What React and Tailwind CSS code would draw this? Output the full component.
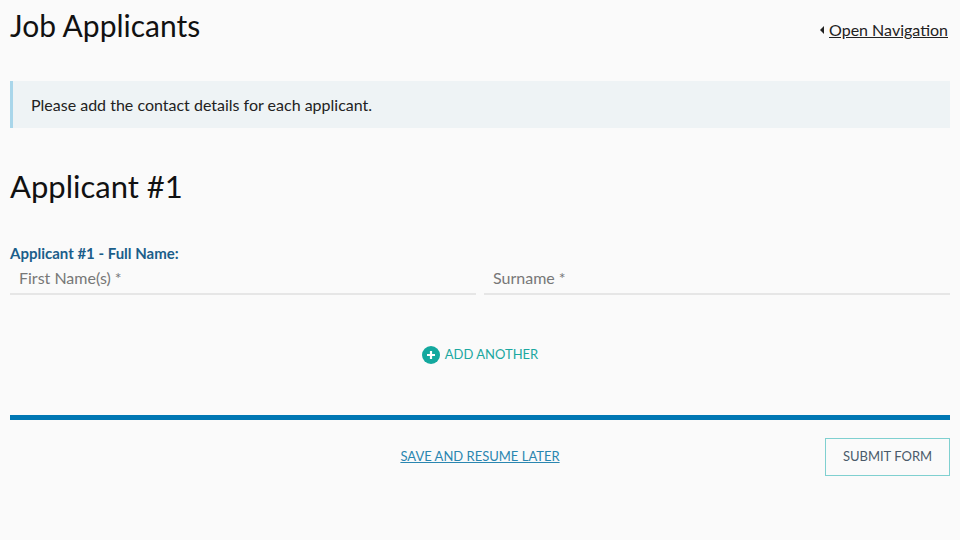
export default function App() {
  return (
    <div className="min-h-[540px] w-[960px] bg-[#fafafa] px-[10px] text-[#222]" style={{ fontFamily: "Lato, 'Noto Sans', sans-serif" }}>
      <div className="flex items-start justify-between pt-[6px]">
        <h1 className="text-[30px] leading-[38px] text-[#111]">Job Applicants</h1>
        <a className="mt-[12px] mr-[2px] flex items-center gap-[5px] text-[16px] text-[#222] underline">
          <span className="inline-block h-0 w-0 border-y-[4px] border-r-[4px] border-y-transparent border-r-[#222]"></span>
          Open Navigation
        </a>
      </div>
      <div className="mt-[37px] flex h-[47px] items-center border-l-[3px] border-[#a9d6ea] bg-[#eef3f5] pl-[18px] text-[16px] text-[#222]">
        Please add the contact details for each applicant.
      </div>
      <h2 className="mt-[39px] text-[31px] leading-[38px] text-[#111]">Applicant #1</h2>
      <div className="mt-[38px] text-[15px] font-bold leading-[20px] text-[#1b5e8a]">Applicant #1 - Full Name:</div>
      <div className="mt-[2px] flex gap-[8px]">
        <div className="h-[30px] flex-1 border-b-2 border-[#e6e6e6] pl-[9px] text-[16px] leading-[26px] text-[#777]">First Name(s) *</div>
        <div className="h-[30px] flex-1 border-b-2 border-[#e6e6e6] pl-[9px] text-[16px] leading-[26px] text-[#777]">Surname *</div>
      </div>
      <div className="mt-[50px] flex items-center justify-center gap-[5px] text-[13px] text-[#1aa8a0]">
        <span className="flex h-[18px] w-[18px] items-center justify-center rounded-full bg-[#13a89e]">
          <svg width="10" height="10" viewBox="0 0 10 10"><path d="M5 1v8M1 5h8" stroke="white" strokeWidth="2.2" /></svg>
        </span>
        ADD ANOTHER
      </div>
      <div className="mt-[50px] h-[5px] bg-[#0077b3]"></div>
      <div className="mt-[18px] flex items-center">
        <div className="flex flex-1 justify-center pl-[125px]">
          <a className="text-[13px] text-[#2a86b0] underline">SAVE AND RESUME LATER</a>
        </div>
        <button className="h-[38px] w-[125px] border border-[#7fd0d0] text-[13px] text-[#4a5a6a]">SUBMIT FORM</button>
      </div>
    </div>
  );
}
